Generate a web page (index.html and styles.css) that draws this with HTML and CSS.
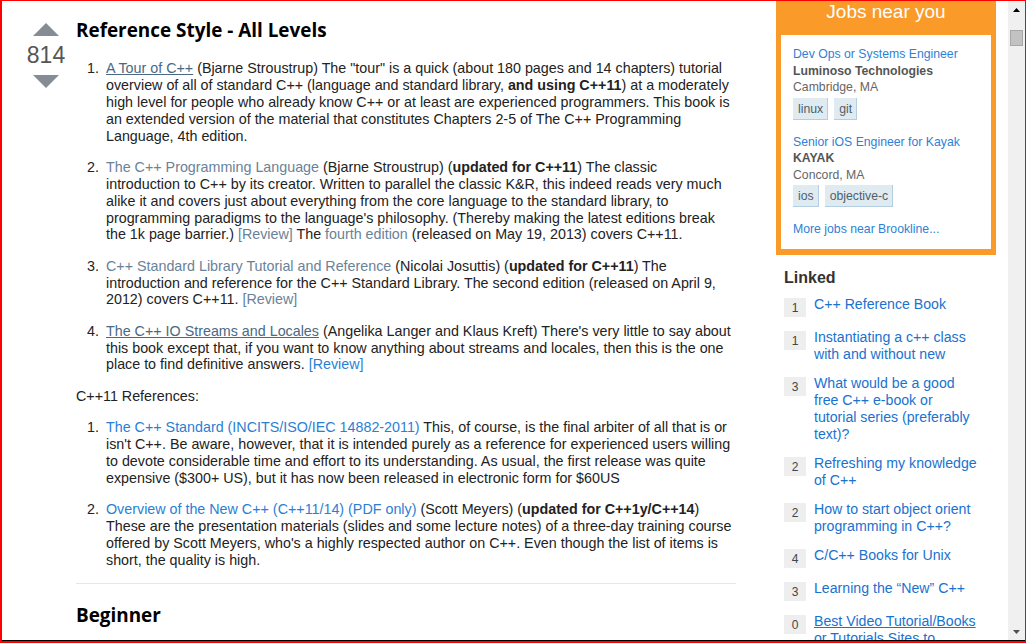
FILE: index.html
```html
<!DOCTYPE html>
<html>
<head>
<meta charset="utf-8">
<link rel="stylesheet" href="styles.css">
</head>
<body>
<div class="frame">
  <div class="inner">
    <div class="page">
      <div class="votecell">
        <svg class="arrow" width="26" height="13" viewBox="0 0 26 13"><polygon points="0,13 13,0 26,13" fill="#858c93"/></svg>
        <div class="count">814</div>
        <svg class="arrow" width="26" height="13" viewBox="0 0 26 13"><polygon points="0,0 26,0 13,13" fill="#858c93"/></svg>
      </div>
      <div class="postcell">
        <h2 class="heading">Reference Style - All Levels</h2>
        <ol class="books">
          <li><p><a class="visited under" href="#">A Tour of C++</a> (Bjarne Stroustrup) The "tour" is a quick (about 180 pages and 14 chapters) tutorial overview of all of standard C++ (language and standard library, <b>and using C++11</b>) at a moderately high level for people who already know C++ or at least are experienced programmers. This book is an extended version of the material that constitutes Chapters 2-5 of The C++ Programming Language, 4th edition.</p></li>
          <li><p><a class="visited" href="#">The C++ Programming Language</a> (Bjarne Stroustrup) (<b>updated for C++11</b>) The classic introduction to C++ by its creator. Written to parallel the classic K&amp;R, this indeed reads very much alike it and covers just about everything from the core language to the standard library, to programming paradigms to the language's philosophy. (Thereby making the latest editions break the 1k page barrier.) <a class="visited" href="#">[Review]</a> The <a class="visited" href="#">fourth edition</a> (released on May 19, 2013) covers C++11.</p></li>
          <li><p><a class="visited" href="#">C++ Standard Library Tutorial and Reference</a> (Nicolai Josuttis) (<b>updated for C++11</b>) The introduction and reference for the C++ Standard Library. The second edition (released on April 9, 2012) covers C++11. <a class="visited" href="#">[Review]</a></p></li>
          <li><p><a class="visited under" href="#">The C++ IO Streams and Locales</a> (Angelika Langer and Klaus Kreft) There's very little to say about this book except that, if you want to know anything about streams and locales, then this is the one place to find definitive answers. <a class="link" href="#">[Review]</a></p></li>
        </ol>
        <p class="plain">C++11 References:</p>
        <ol class="books">
          <li><p><a class="link" href="#">The C++ Standard (INCITS/ISO/IEC 14882-2011)</a> This, of course, is the final arbiter of all that is or isn't C++. Be aware, however, that it is intended purely as a reference for experienced users willing to devote considerable time and effort to its understanding. As usual, the first release was quite expensive ($300+ US), but it has now been released in electronic form for $60US</p></li>
          <li><p><a class="link" href="#">Overview of the New C++ (C++11/14) (PDF only)</a> (Scott Meyers) (<b>updated for C++1y/C++14</b>) These are the presentation materials (slides and some lecture notes) of a three-day training course offered by Scott Meyers, who's a highly respected author on C++. Even though the list of items is short, the quality is high.</p></li>
        </ol>
        <hr class="rule">
        <h2 class="heading second">Beginner</h2>
      </div>
      <div class="sidebar">
        <div class="jobs">
          <div class="jobs-title">Jobs near you</div>
          <div class="jobs-body">
            <div class="job">
              <a class="job-link" href="#">Dev Ops or Systems Engineer</a>
              <div class="job-company">Luminoso Technologies</div>
              <div class="job-loc">Cambridge, MA</div>
              <div class="tags"><span class="tag">linux</span><span class="tag">git</span></div>
            </div>
            <div class="job">
              <a class="job-link" href="#">Senior iOS Engineer for Kayak</a>
              <div class="job-company">KAYAK</div>
              <div class="job-loc">Concord, MA</div>
              <div class="tags"><span class="tag">ios</span><span class="tag">objective-c</span></div>
            </div>
            <a class="job-link more" href="#">More jobs near Brookline...</a>
          </div>
        </div>
        <div class="linked">
          <h4 class="linked-title">Linked</h4>
          <div class="linked-item"><span class="badge">1</span><a href="#">C++ Reference Book</a></div>
          <div class="linked-item"><span class="badge">1</span><a href="#">Instantiating a c++ class with and without new</a></div>
          <div class="linked-item"><span class="badge">3</span><a href="#">What would be a good free C++ e-book or tutorial series (preferably text)?</a></div>
          <div class="linked-item"><span class="badge">2</span><a href="#">Refreshing my knowledge of C++</a></div>
          <div class="linked-item"><span class="badge">2</span><a href="#">How to start object orient programming in C++?</a></div>
          <div class="linked-item"><span class="badge">4</span><a href="#">C/C++ Books for Unix</a></div>
          <div class="linked-item"><span class="badge">3</span><a href="#">Learning the “New” C++</a></div>
          <div class="linked-item"><span class="badge">0</span><a class="under" href="#">Best Video Tutorial/Books or Tutorials Sites to Understand C++?</a></div>
        </div>
      </div>
    </div>
    <div class="scrollbar">
      <div class="sb-btn"><svg width="7" height="4" viewBox="0 0 7 4"><polygon points="0,4 3.5,0 7,4" fill="#000"/></svg></div>
      <div class="sb-track"><div class="sb-thumb"></div></div>
      <div class="sb-btn"><svg width="7" height="4" viewBox="0 0 7 4"><polygon points="0,0 7,0 3.5,4" fill="#505050"/></svg></div>
    </div>
  </div>
</div>
</body>
</html>
```

FILE: styles.css
```css
html, body {
  margin: 0;
  padding: 0;
  background: #fff;
}
body {
  width: 1026px;
  height: 643px;
  overflow: hidden;
  font-family: "Liberation Sans", Arial, sans-serif;
}
.frame {
  box-sizing: border-box;
  width: 1026px;
  height: 643px;
  border-style: solid;
  border-color: #ff0000;
  border-width: 1px 1px 2px 2px;
  overflow: hidden;
}
.inner {
  display: flex;
  height: 640px;
  box-sizing: border-box;
  border-bottom: 1px solid #000;
  overflow: hidden;
}
.page {
  flex: 1;
  display: flex;
  align-items: flex-start;
  padding-left: 23px;
  overflow: hidden;
}
.votecell {
  width: 42px;
  flex: none;
  display: flex;
  flex-direction: column;
  align-items: center;
  padding-top: 22px;
}
.arrow {
  display: block;
}
.count {
  font-size: 23px;
  line-height: 26px;
  color: #555;
  margin: 6px 0 7px;
}
.postcell {
  width: 660px;
  flex: none;
  margin-left: 9px;
  font-size: 14.3px;
  line-height: 16.9px;
  color: #222;
}
.heading {
  font-family: "Open Sans", "Liberation Sans", sans-serif;
  font-weight: 700;
  font-size: 18.9px;
  line-height: 24px;
  color: #000;
  margin: 17px 0 18px;
}
.heading.second {
  margin-top: 19px;
}
.books {
  list-style: none;
  margin: 0;
  padding: 0;
  counter-reset: item;
}
.books li {
  display: flex;
  counter-increment: item;
  padding-left: 11px;
  padding-right: 3px;
  margin-bottom: 14.3px;
}
.books li::before {
  content: counter(item) ".";
  flex: none;
  width: 19px;
}
.books p {
  margin: 0;
}
.plain {
  margin: 0 0 14.3px;
}
a {
  text-decoration: none;
}
.visited {
  color: #6a8298;
}
.visited.under {
  color: #4b6884;
  text-decoration: underline;
}
.link {
  color: #2a7fd4;
}
.rule {
  border: 0;
  border-top: 1px solid #e4e6e8;
  margin: 0;
  height: 0;
}
.sidebar {
  width: 220px;
  flex: none;
  margin-left: 40px;
}
.jobs {
  background: #fa9a28;
  padding: 0 5px 6px;
}
.jobs-title {
  color: #fff;
  font-size: 19px;
  line-height: 22px;
  height: 34px;
  text-align: center;
}
.jobs-body {
  background: #fff;
  padding: 11px 12px 11px;
  font-size: 12.25px;
  line-height: 16.5px;
}
.job {
  margin-bottom: 14px;
}
.job-link {
  display: block;
  color: #2f7fd6;
}
.job-company {
  font-weight: bold;
  color: #555;
}
.job-loc {
  color: #666;
}
.tags {
  display: flex;
  gap: 6px;
  margin-top: 2px;
}
.tag {
  background: #e0eaf1;
  color: #4d5f6b;
  border-right: 1px solid #b3cee1;
  border-bottom: 1px solid #b3cee1;
  padding: 3px 4px 2px 5px;
  line-height: 16px;
}
.linked {
  padding: 0 18.5px 0 8px;
}
.linked-title {
  font-size: 16px;
  line-height: 20px;
  font-weight: bold;
  color: #333;
  margin: 13px 0 8px;
}
.linked-item {
  display: flex;
  align-items: flex-start;
  gap: 8px;
  margin-bottom: 12px;
  font-size: 14.15px;
  line-height: 17px;
}
.linked-item a {
  color: #1a72cf;
}
.linked-item a.under {
  text-decoration: underline;
}
.badge {
  flex: none;
  width: 22px;
  height: 19px;
  margin-top: 2px;
  background: #eeeeee;
  color: #444;
  font-size: 12px;
  line-height: 21px;
  text-align: center;
}
.scrollbar {
  width: 17px;
  flex: none;
  background: #f0f0f0;
  display: flex;
  flex-direction: column;
}
.sb-btn {
  height: 17px;
  display: flex;
  align-items: center;
  justify-content: center;
  flex: none;
}
.sb-track {
  flex: 1;
  padding-top: 12px;
}
.sb-thumb {
  width: 13px;
  height: 16px;
  margin-left: 2px;
  background: #c2c2c2;
  border: 1px solid #a8a8a8;
  box-sizing: border-box;
}
```
